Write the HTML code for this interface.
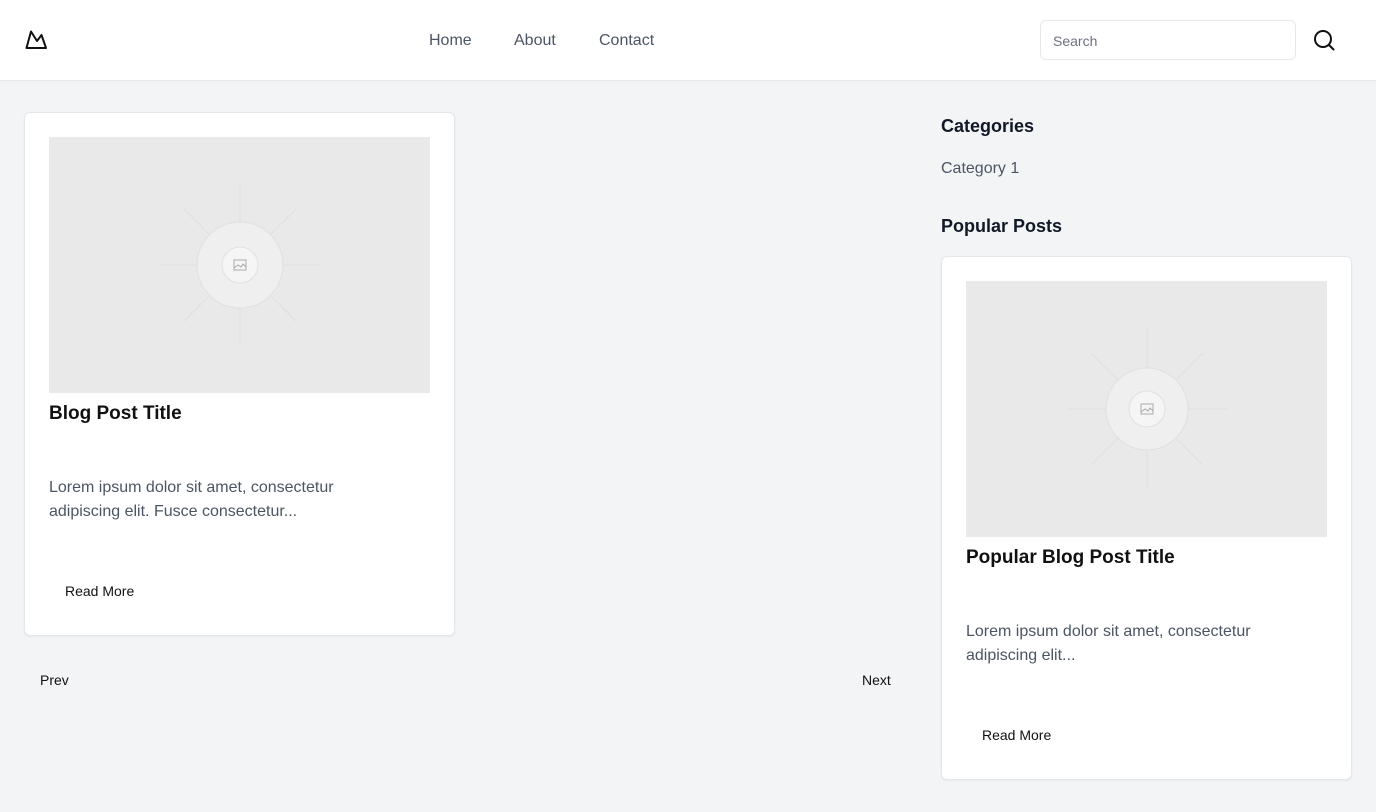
<!DOCTYPE html>
<html><head><style>
*{box-sizing:border-box;margin:0;padding:0}
body{width:1376px;height:812px;background:#f3f4f6;font-family:"Liberation Sans",sans-serif;position:relative;overflow:hidden}
header{position:absolute;left:0;top:0;width:1376px;height:81px;background:#fff;border-bottom:1px solid #e5e7eb}
.nav a{position:absolute;top:32px;font-size:16px;color:#4b5563;text-decoration:none}
.search{position:absolute;left:1040px;top:20px;width:256px;height:40px;border:1px solid #e5e7eb;border-radius:6px;font-size:14px;color:#6b7280;padding:12px 12px}
.card{position:absolute;background:#fff;border:1px solid #e5e7eb;border-radius:6px;box-shadow:0 1px 2px rgba(0,0,0,.05)}
.ph{position:absolute;background:#e9e9e9}
h2{position:absolute;font-size:19px;font-weight:bold;color:#111}
p.t{position:absolute;font-size:16px;line-height:24px;color:#4b5563}
.btn{position:absolute;font-size:14px;color:#111}
h3{position:absolute;font-size:18px;font-weight:bold;color:#111827}
</style></head><body>
<header>
<svg style="position:absolute;left:24px;top:28px" width="26" height="24" viewBox="24 28 26 24"><path d="M26.5 48 L31 31.5 L37 41 L41.5 35 L46 48 Z" fill="none" stroke="#111" stroke-width="2" stroke-linejoin="round"/></svg>
<div class="nav"><a style="left:429px">Home</a><a style="left:514px">About</a><a style="left:599px">Contact</a></div>
<div class="search">Search</div>
<svg style="position:absolute;left:1312px;top:28px" width="24" height="24" viewBox="0 0 24 24"><circle cx="11" cy="11" r="8" fill="none" stroke="#111" stroke-width="2"/><path d="M17 17l4.5 4.5" stroke="#111" stroke-width="2" stroke-linecap="round"/></svg>
</header>

<div class="card" style="left:24px;top:112px;width:431px;height:524px"></div>
<div class="ph" style="left:49px;top:137px;width:381px;height:256px"><svg width="381" height="256"><g stroke="#e0e0e0" fill="none"><path d="M191 48V208M111 128H271M135 72L247 184M247 72L135 184"/><circle cx="191" cy="128" r="43" fill="#efefef"/><circle cx="191" cy="128" r="18" fill="#f5f5f5"/><rect x="185" y="123" width="12" height="10" stroke="#aaa"/><path d="M185 131l4-3 3 2 2-3 3 3" stroke="#aaa"/></g></svg></div>
<h2 style="left:49px;top:403px">Blog Post Title</h2>
<p class="t" style="left:49px;top:476px;width:360px">Lorem ipsum dolor sit amet, consectetur adipiscing elit. Fusce consectetur...</p>
<div class="btn" style="left:65px;top:583px">Read More</div>
<div class="btn" style="left:40px;top:672px">Prev</div>
<div class="btn" style="left:862px;top:672px">Next</div>

<h3 style="left:941px;top:116px">Categories</h3>
<p class="t" style="left:941px;top:157px">Category 1</p>
<h3 style="left:941px;top:216px">Popular Posts</h3>
<div class="card" style="left:941px;top:256px;width:411px;height:524px"></div>
<div class="ph" style="left:966px;top:281px;width:361px;height:256px"><svg width="361" height="256"><g stroke="#e0e0e0" fill="none"><path d="M181 48V208M101 128H261M125 72L237 184M237 72L125 184"/><circle cx="181" cy="128" r="41" fill="#efefef"/><circle cx="181" cy="128" r="18" fill="#f5f5f5"/><rect x="175" y="123" width="12" height="10" stroke="#aaa"/><path d="M175 131l4-3 3 2 2-3 3 3" stroke="#aaa"/></g></svg></div>
<h2 style="left:966px;top:547px">Popular Blog Post Title</h2>
<p class="t" style="left:966px;top:620px;width:340px">Lorem ipsum dolor sit amet, consectetur adipiscing elit...</p>
<div class="btn" style="left:982px;top:727px">Read More</div>
</body></html>
